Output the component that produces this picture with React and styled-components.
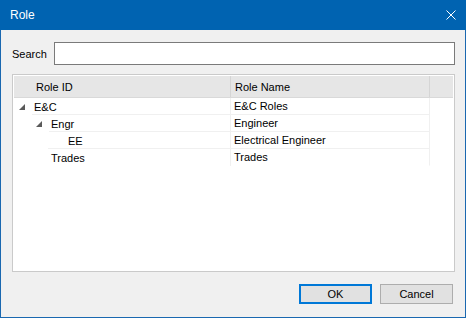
import React from "react";
import styled, { createGlobalStyle } from "styled-components";

const GlobalStyle = createGlobalStyle`
  html, body {
    margin: 0;
    padding: 0;
    background: #ffffff;
  }
  body {
    font-family: "Liberation Sans", Arial, sans-serif;
    font-size: 11px;
    color: #000000;
  }
`;

const Window = styled.div`
  width: 466px;
  height: 318px;
  box-sizing: border-box;
  background: #1a68b0;
  padding: 0 1px 1px;
  display: flex;
  flex-direction: column;
`;

const TitleBar = styled.div`
  height: 30px;
  margin: 0 -1px;
  background: #0063b1;
  display: flex;
  align-items: center;
  justify-content: space-between;
  padding: 0 10px 0 10px;
  color: #ffffff;
  font-size: 12px;
`;

const CloseButton = styled.div`
  width: 10px;
  height: 10px;
  display: flex;
  svg {
    display: block;
  }
`;

const Body = styled.div`
  flex: 1;
  background: #f0f0f0;
  padding: 12px 10px 13px 11px;
  display: flex;
  flex-direction: column;
  min-height: 0;
`;

const SearchRow = styled.div`
  display: flex;
  align-items: center;
  height: 23px;
`;

const Label = styled.label`
  width: 42px;
  padding-top: 1px;
`;

const SearchInput = styled.input`
  flex: 1;
  height: 23px;
  box-sizing: border-box;
  border: 1px solid #7a7a7a;
  background: #ffffff;
  margin: 0;
  outline: none;
  font: inherit;
`;

const TreePanel = styled.div`
  flex: 1;
  margin-top: 9px;
  border: 1px solid #cacaca;
  background: #ffffff;
  padding: 1px;
  display: flex;
  flex-direction: column;
`;

const HeaderRow = styled.div`
  display: flex;
  height: 22px;
  background: #e6e6e6;
  border-bottom: 1px solid #d9d9d9;
  box-sizing: border-box;
`;

const HeaderCell = styled.div`
  width: ${(p) => p.$width}px;
  flex: ${(p) => (p.$fill ? 1 : "none")};
  box-sizing: border-box;
  padding-left: ${(p) => p.$pad}px;
  display: flex;
  align-items: center;
  border-right: ${(p) => (p.$fill ? "none" : "1px solid #d5d5d5")};
`;

const Row = styled.div`
  display: flex;
  height: 17px;
`;

const NameCell = styled.div`
  width: 217px;
  flex: none;
  position: relative;
  display: flex;
  align-items: center;
  box-sizing: border-box;
  padding-left: ${(p) => p.$indent}px;
  border-right: 1px solid #f0f0f0;
`;

const Underline = styled.div`
  position: absolute;
  left: ${(p) => p.$from}px;
  right: 0;
  bottom: 0;
  border-bottom: 1px solid #f0f0f0;
`;

const Expander = styled.div`
  width: 18px;
  height: 100%;
  flex: none;
  display: flex;
  align-items: center;
  padding-left: 5px;
  box-sizing: border-box;
`;

const CellText = styled.span`
  padding-left: 2px;
  white-space: nowrap;
`;

const ValueCell = styled.div`
  width: 199px;
  flex: none;
  display: flex;
  align-items: center;
  padding-left: 3px;
  box-sizing: border-box;
  border-right: 1px solid #f0f0f0;
  border-bottom: ${(p) => (p.$line ? "1px solid #f0f0f0" : "1px solid transparent")};
`;

const Footer = styled.div`
  display: flex;
  justify-content: flex-end;
  gap: 8px;
  margin-top: 12px;
  padding-right: 2px;
`;

const Button = styled.button`
  width: 73px;
  height: 20px;
  box-sizing: border-box;
  margin: 0;
  padding: 0;
  background: #e1e1e1;
  border: ${(p) => (p.$default ? "2px solid #0078d7" : "1px solid #adadad")};
  font: inherit;
  color: #000000;
`;

const rows = [
  { id: "E&C", name: "E&C Roles", level: 0, expanded: true, line: 32 },
  { id: "Engr", name: "Engineer", level: 1, expanded: true, line: 49 },
  { id: "EE", name: "Electrical Engineer", level: 2, line: 48 },
  { id: "Trades", name: "Trades", level: 1 },
];

function Triangle() {
  return (
    <svg width="6" height="6" viewBox="0 0 6 6">
      <polygon points="6,0 6,6 0,6" fill="#5a5a5a" />
    </svg>
  );
}

export default function App() {
  return (
    <>
      <GlobalStyle />
      <Window>
        <TitleBar>
          <span>Role</span>
          <CloseButton>
            <svg width="10" height="10" viewBox="0 0 10 10">
              <path d="M0.5 0.5 L9.5 9.5 M9.5 0.5 L0.5 9.5" stroke="#ffffff" strokeWidth="1" />
            </svg>
          </CloseButton>
        </TitleBar>
        <Body>
          <SearchRow>
            <Label>Search</Label>
            <SearchInput />
          </SearchRow>
          <TreePanel>
            <HeaderRow>
              <HeaderCell $width={217} $pad={22}>Role ID</HeaderCell>
              <HeaderCell $width={199} $pad={4}>Role Name</HeaderCell>
              <HeaderCell $fill />
            </HeaderRow>
            {rows.map((r) => (
              <Row key={r.id}>
                <NameCell $indent={r.level * 17}>
                  {r.line && <Underline $from={r.line - 14} />}
                  <Expander>{r.expanded && <Triangle />}</Expander>
                  <CellText>{r.id}</CellText>
                </NameCell>
                <ValueCell $line={!!r.line}>{r.name}</ValueCell>
              </Row>
            ))}
          </TreePanel>
          <Footer>
            <Button $default>OK</Button>
            <Button>Cancel</Button>
          </Footer>
        </Body>
      </Window>
    </>
  );
}
